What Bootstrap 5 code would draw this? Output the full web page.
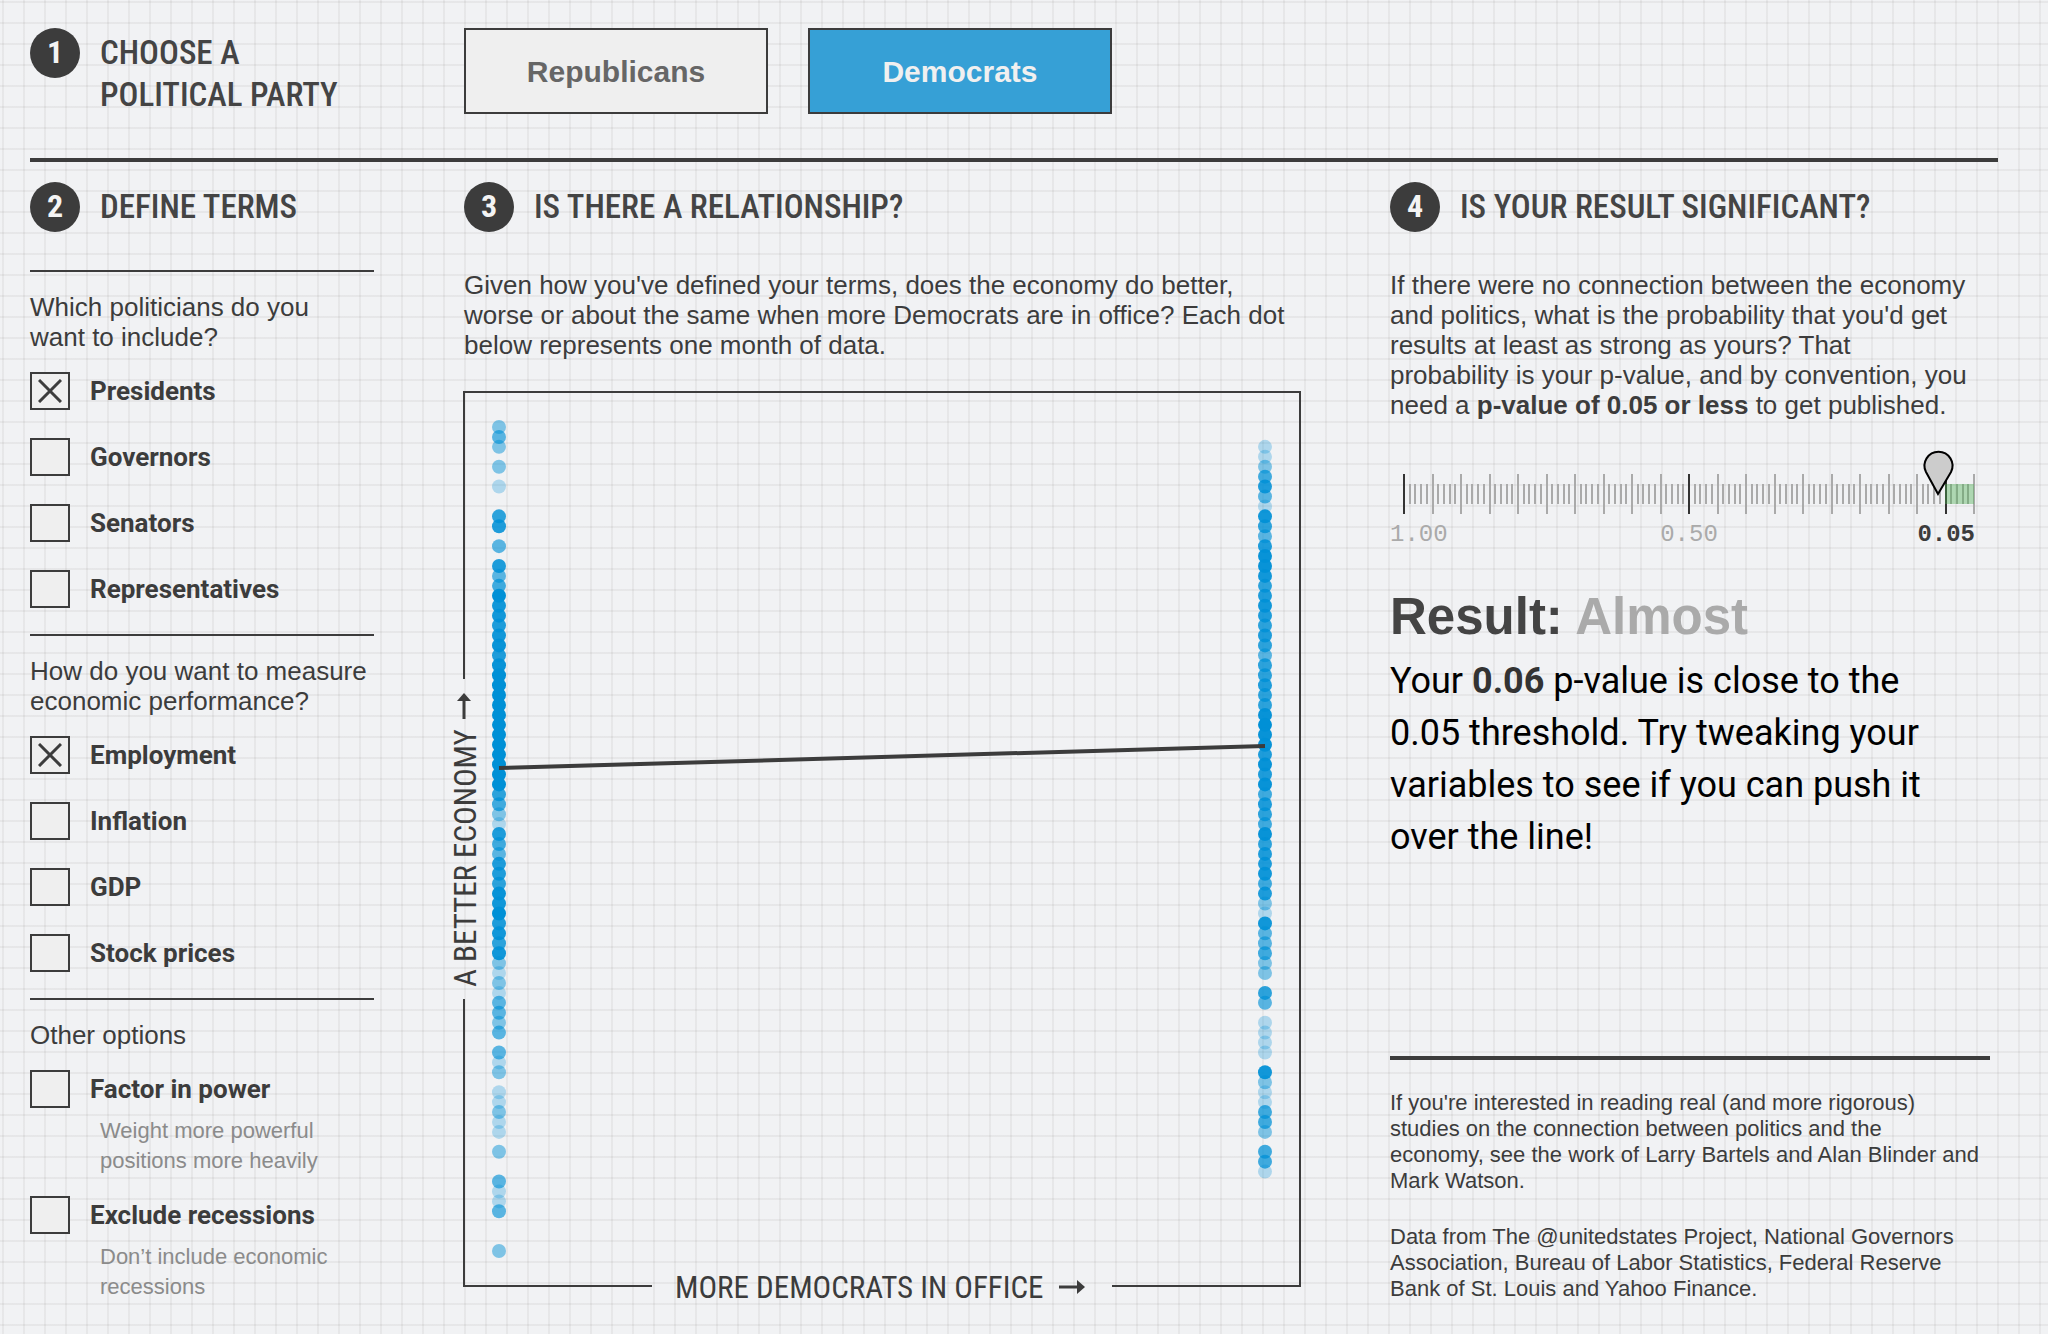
<!DOCTYPE html>
<html lang="en">
<head>
<meta charset="utf-8">
<meta name="viewport" content="width=device-width, initial-scale=1">
<title>Politics and the economy</title>
<link rel="stylesheet" href="https://cdn.jsdelivr.net/npm/bootstrap@5.3.0/dist/css/bootstrap.min.css">
<style>
  :root { --ink: #3c3c3c; --dem: #0090d6; }
  body {
    color: var(--ink);
    font: 26px/30px "Liberation Sans", Arial, sans-serif;
    background-color: #f1f2f4;
    background-image:
      linear-gradient(90deg, rgba(60,50,40,.06) 2px, transparent 2px),
      linear-gradient(rgba(60,50,40,.06) 2px, transparent 2px);
    background-size: 21px 21px;
    background-position: 2px 0, 0 1px;
  }
  .page { padding: 28px 50px 24px 30px; min-height: 100vh; }
  .board { display: grid; grid-template-columns: 344fr 836fr 608fr; column-gap: 90px; }
  .top-rule { border-bottom: 4px solid var(--ink); padding-bottom: 42px; margin-bottom: 20px; }
  .step-no {
    width: 50px; height: 50px; padding-bottom: 3px;
    background: var(--ink); color: #f4f4f4;
    font: 700 32px/32px "Roboto Condensed", Roboto, sans-serif;
  }
  .step-title {
    font: 500 33px/42px "Roboto Condensed", Roboto, sans-serif;
    color: #444; padding-top: 4px;
  }
  .step { gap: 20px; min-height: 50px; }
  .board > section > .step { margin-bottom: 38px; }
  .party {
    width: 304px; height: 86px; border: 2px solid var(--ink); border-radius: 0;
    background: #efefef; color: #666; font-size: 30px; font-weight: 700;
  }
  .party:hover { background: #e4e4e4; border-color: var(--ink); color: #666; }
  .party.active { background: #36a0d6; border-color: var(--ink); color: #f0f0f0; }
  .parties { gap: 40px; }
  .terms { border-top: 2px solid var(--ink); padding-top: 20px; }
  .terms-title { margin-bottom: 20px; }
  .choices { gap: 28px; padding-bottom: 26px; }
  .choices.noted { gap: 20px; padding-bottom: 0; }
  .choice { gap: 20px; font: 700 26px/38px Roboto, sans-serif; }
  .tick {
    appearance: none; width: 40px; height: 38px; margin: 0;
    border: 2px solid var(--ink); background: #efefef center/24px 24px no-repeat;
  }
  .tick:checked {
    background-image: url("data:image/svg+xml,%3Csvg xmlns='http://www.w3.org/2000/svg' viewBox='0 0 24 24'%3E%3Cpath d='M1 1L23 23M23 1L1 23' stroke='%233c3c3c' stroke-width='3'/%3E%3C/svg%3E");
  }
  .note { font-size: 22px; line-height: 30px; color: #8b8b8b; margin: 8px 40px 0 70px; }
  .intro { margin-bottom: 30px; }
  .plot { width: 100%; overflow: visible; }
  .axis-name { font: 400 31px "Roboto Condensed", Roboto, sans-serif; fill: var(--ink); }
  .gauge { width: 100%; margin-top: -4px; }
  .gauge text { font: 24px "Liberation Mono", monospace; fill: #aaa; }
  .gauge .limit { font-weight: 700; fill: var(--ink); }
  .verdict { font-size: 51px; line-height: 60px; font-weight: 700; color: #444; margin: 39px 0 8px; }
  .verdict span { color: #aaa; }
  .advice { font: 36px/52px Roboto, sans-serif; color: #000; max-width: 570px; }
  .advice b { color: #333; }
  .sources { width: 600px; max-width: 100%; border-top: 4px solid var(--ink); padding-top: 30px; font-size: 22px; line-height: 26px; }
  .sources p + p { margin-top: 30px; }
</style>
<script src="https://cdn.jsdelivr.net/npm/bootstrap@5.3.0/dist/js/bootstrap.bundle.min.js"></script>
</head>
<body>
<main class="page">
  <header class="board top-rule">
    <div class="step d-flex">
      <span class="step-no rounded-circle d-flex align-items-center justify-content-center flex-shrink-0">1</span>
      <h2 class="step-title m-0">CHOOSE A<br>POLITICAL PARTY</h2>
    </div>
    <div class="parties d-flex">
      <button type="button" class="btn party">Republicans</button>
      <button type="button" class="btn party active" aria-pressed="true">Democrats</button>
    </div>
  </header>

  <div class="board">
    <section>
      <div class="step d-flex">
        <span class="step-no rounded-circle d-flex align-items-center justify-content-center flex-shrink-0">2</span>
        <h2 class="step-title m-0">DEFINE TERMS</h2>
      </div>
      <div class="terms" role="group" aria-labelledby="who">
        <p class="terms-title" id="who">Which politicians do you<br>want to include?</p>
        <div class="choices d-flex flex-column">
          <div class="choice d-flex"><input class="tick" type="checkbox" id="pres" checked><label for="pres">Presidents</label></div>
          <div class="choice d-flex"><input class="tick" type="checkbox" id="gov"><label for="gov">Governors</label></div>
          <div class="choice d-flex"><input class="tick" type="checkbox" id="sen"><label for="sen">Senators</label></div>
          <div class="choice d-flex"><input class="tick" type="checkbox" id="rep"><label for="rep">Representatives</label></div>
        </div>
      </div>
      <div class="terms" role="group" aria-labelledby="how">
        <p class="terms-title" id="how">How do you want to measure<br>economic performance?</p>
        <div class="choices d-flex flex-column">
          <div class="choice d-flex"><input class="tick" type="checkbox" id="emp" checked><label for="emp">Employment</label></div>
          <div class="choice d-flex"><input class="tick" type="checkbox" id="inf"><label for="inf">Inflation</label></div>
          <div class="choice d-flex"><input class="tick" type="checkbox" id="gdp"><label for="gdp">GDP</label></div>
          <div class="choice d-flex"><input class="tick" type="checkbox" id="stk"><label for="stk">Stock prices</label></div>
        </div>
      </div>
      <div class="terms" role="group" aria-labelledby="other">
        <p class="terms-title" id="other">Other options</p>
        <div class="choices noted d-flex flex-column">
          <div>
            <div class="choice d-flex"><input class="tick" type="checkbox" id="fac"><label for="fac">Factor in power</label></div>
            <p class="note">Weight more powerful positions more heavily</p>
          </div>
          <div>
            <div class="choice d-flex"><input class="tick" type="checkbox" id="exc"><label for="exc">Exclude recessions</label></div>
            <p class="note">Don’t include economic recessions</p>
          </div>
        </div>
      </div>
    </section>

    <section>
      <div class="step d-flex">
        <span class="step-no rounded-circle d-flex align-items-center justify-content-center flex-shrink-0">3</span>
        <h2 class="step-title m-0">IS THERE A RELATIONSHIP?</h2>
      </div>
      <p class="intro">Given how you've defined your terms, does the economy do better,<br>worse or about the same when more Democrats are in office? Each dot<br>below represents one month of data.</p>
      <svg class="plot d-block" viewBox="0 0 836 912" role="img" aria-label="Scatter plot of economy against Democrats in office">
        <path d="M0 289V2H836V896H648M188 896H0V609" fill="none" stroke="#3c3c3c" stroke-width="2"/>
        <g id="dots" fill="#0090d6"></g>
        <path d="M35 378L801 356" stroke="#3c3c3c" stroke-width="4"/>
        <text class="axis-name" transform="translate(12 597) rotate(-90)">A BETTER ECONOMY</text>
        <path d="M0 329V308" stroke="#3c3c3c" stroke-width="3"/><path d="M0 303l7 8h-14z" fill="#3c3c3c"/>
        <text class="axis-name" x="211" y="908">MORE DEMOCRATS IN OFFICE</text>
        <path d="M595 897H615" stroke="#3c3c3c" stroke-width="3"/><path d="M621 897l-8 7v-14z" fill="#3c3c3c"/>
      </svg>
    </section>

    <section class="d-flex flex-column">
      <div class="step d-flex">
        <span class="step-no rounded-circle d-flex align-items-center justify-content-center flex-shrink-0">4</span>
        <h2 class="step-title m-0">IS YOUR RESULT SIGNIFICANT?</h2>
      </div>
      <p class="intro">If there were no connection between the economy<br>and politics, what is the probability that you'd get<br>results at least as strong as yours? That<br>probability is your p-value, and by convention, you<br>need a <b>p-value of 0.05 or less</b> to get published.</p>
      <svg class="gauge d-block" viewBox="0 0 608 102" role="img" aria-label="p-value scale, marker at 0.06">
        <g id="ticks" stroke-width="2"></g>
        <rect x="555" y="38" width="29" height="20" fill="#4caf50" fill-opacity=".4"/>
        <path d="M548 48L536 26A14 14 0 1 1 561 26Z" fill="#ccc" stroke="#000" stroke-width="2"/>
        <text x="0" y="95">1.00</text>
        <text x="299" y="95" text-anchor="middle">0.50</text>
        <text class="limit" x="585" y="95" text-anchor="end">0.05</text>
      </svg>
      <h3 class="verdict">Result: <span>Almost</span></h3>
      <p class="advice m-0">Your <b>0.06</b> p-value is close to the 0.05 threshold. Try tweaking your variables to see if you can push it over the line!</p>
      <footer class="sources mt-auto">
        <p class="m-0">If you're interested in reading real (and more rigorous)<br>studies on the connection between politics and the<br>economy, see the work of Larry Bartels and Alan Blinder and<br>Mark Watson.</p>
        <p class="mb-0">Data from The @unitedstates Project, National Governors<br>Association, Bureau of Labor Statistics, Federal Reserve<br>Bank of St. Louis and Yahoo Finance.</p>
      </footer>
    </section>
  </div>
</main>
<script>
  // Months per economy bucket, best economy first: no Democrat in office on the left, one on the right.
  const shade = [0, .28, .48, .63, .74, .82, .88, .93, .97, 1];
  const left = [2,3,2,0,2,0,1,0,0,5,6,0,3,0,6,3,4,9,7,7,6,7,8,6,8,9,9,9,9,9,9,9,9,9,9,9,9,5,4,2,1,6,4,3,6,6,5,8,7,9,6,7,5,7,2,1,2,1,3,3,2,3,0,3,1,2,0,1,1,2,1,1,0,2,0,0,3,1,1,3,0,0,0,2];
  const right = [0,0,1,1,2,4,6,3,1,7,5,3,6,8,8,7,5,6,7,6,5,6,5,3,5,5,6,5,5,8,9,8,8,6,8,6,8,4,6,5,4,8,5,6,6,7,4,6,2,1,7,3,3,4,2,2,0,5,3,0,1,1,1,1,0,7,2,1,1,4,4,2,0,4,4,1];
  const dot = x => (n, i) => n ? `<circle cx="${x}" cy="${37 + i * 9.928}" r="7" opacity="${shade[n]}"/>` : '';
  document.getElementById('dots').innerHTML = left.map(dot(35)).join('') + right.map(dot(801)).join('');

  let ticks = '';
  for (let i = 0; i <= 100; i++) {
    const x = Math.round(14 + i * 5.7), long = i % 5 === 0;
    const dark = i === 0 || i === 50 || i === 95;
    ticks += `<path d="M${x} ${long ? 28 : 38}V${long ? 68 : 58}" stroke="${dark ? '#333' : '#aaa'}"/>`;
  }
  document.getElementById('ticks').innerHTML = ticks;
</script>
</body>
</html>
